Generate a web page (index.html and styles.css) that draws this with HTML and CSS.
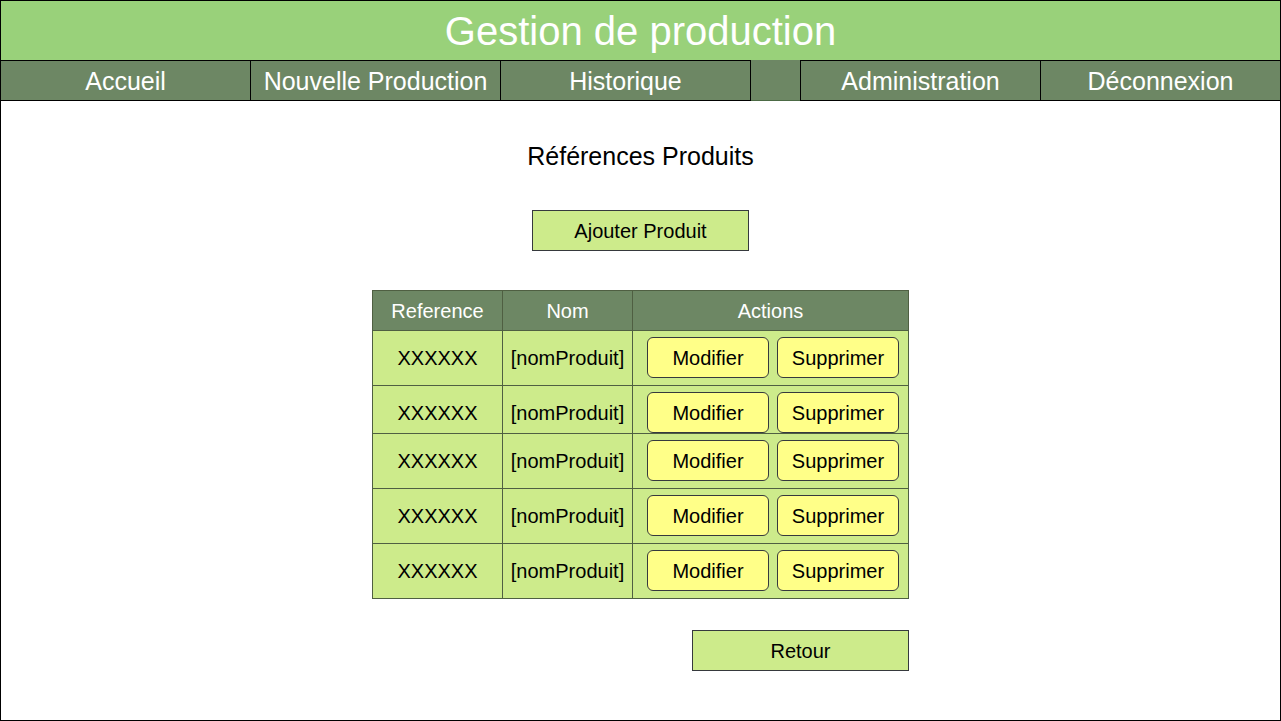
FILE: index.html
```html
<!DOCTYPE html>
<html lang="fr">
<head>
  <meta charset="utf-8">
  <title>Gestion de production</title>
  <meta name="viewport" content="width=device-width, initial-scale=1">
  <link rel="stylesheet" href="styles.css">
</head>
<body>
  <div class="page">
    <header class="banner">
      <h1 class="banner-title">Gestion de production</h1>
    </header>
    <nav class="nav">
      <a class="nav-link nav-first" href="#">Accueil</a>
      <a class="nav-link" href="#">Nouvelle Production</a>
      <a class="nav-link nav-closed" href="#">Historique</a>
      <span class="nav-space"></span>
      <a class="nav-link" href="#">Administration</a>
      <a class="nav-link" href="#">Déconnexion</a>
    </nav>
    <main class="content">
      <h2 class="title">Références Produits</h2>
      <button class="button" type="button">Ajouter Produit</button>
      <div class="listing">
        <table class="products">
          <thead>
            <tr><th class="col-small">Reference</th><th class="col-small">Nom</th><th>Actions</th></tr>
          </thead>
          <tbody>
            <tr>
              <td>XXXXXX</td><td>[nomProduit]</td>
              <td class="cell-actions"><div class="actions"><button class="action" type="button">Modifier</button><button class="action" type="button">Supprimer</button></div></td>
            </tr>
            <tr class="row-tight">
              <td>XXXXXX</td><td>[nomProduit]</td>
              <td class="cell-actions"><div class="actions"><button class="action" type="button">Modifier</button><button class="action" type="button">Supprimer</button></div></td>
            </tr>
            <tr>
              <td>XXXXXX</td><td>[nomProduit]</td>
              <td class="cell-actions"><div class="actions"><button class="action" type="button">Modifier</button><button class="action" type="button">Supprimer</button></div></td>
            </tr>
            <tr>
              <td>XXXXXX</td><td>[nomProduit]</td>
              <td class="cell-actions"><div class="actions"><button class="action" type="button">Modifier</button><button class="action" type="button">Supprimer</button></div></td>
            </tr>
            <tr>
              <td>XXXXXX</td><td>[nomProduit]</td>
              <td class="cell-actions"><div class="actions"><button class="action" type="button">Modifier</button><button class="action" type="button">Supprimer</button></div></td>
            </tr>
          </tbody>
        </table>
        <button class="button" type="button">Retour</button>
      </div>
    </main>
  </div>
</body>
</html>
```

FILE: styles.css
```css
* {
  box-sizing: border-box;
}

body {
  margin: 0;
  background: #fff;
  color: #000;
  font-family: "Liberation Sans", Arial, sans-serif;
  font-size: 20px;
}

.page {
  min-height: 100vh;
  border: 1px solid #000;
}

.banner {
  padding-top: 2px;
  background: #99d17a;
  color: #fff;
  text-align: center;
}

.banner-title {
  margin: 0;
  font-size: 40px;
  font-weight: 400;
  line-height: 57px;
}

.nav {
  display: grid;
  grid-template-columns: 249fr 250fr 251fr 49fr 240fr 240fr;
  background: #6d8764;
}

.nav-link {
  padding-top: 2px;
  border: solid #000;
  border-width: 1px 0 1px 1px;
  color: #fff;
  font-size: 25px;
  line-height: 37px;
  text-align: center;
  text-decoration: none;
  white-space: nowrap;
}

.nav-first {
  border-left-width: 0;
}

.nav-closed {
  border-right-width: 1px;
}

.nav-space {
  border-bottom: 1px solid #4c6a45;
}

.content {
  display: flex;
  flex-direction: column;
  align-items: center;
  padding: 40px 0;
}

.title {
  margin: 0 0 39px;
  font-size: 25px;
  font-weight: 400;
  line-height: 30px;
}

.button,
.action {
  padding: 2px 0 0;
  border: 1px solid #36393d;
  color: #000;
  font: inherit;
  line-height: 37px;
  cursor: pointer;
}

.button {
  width: 217px;
  background: #cdeb8b;
}

.listing {
  display: flex;
  flex-direction: column;
  align-items: flex-end;
  gap: 31px;
  margin-top: 39px;
}

.products {
  width: 537px;
  border: solid #4f5f42;
  border-width: 1px 0 0 1px;
  border-spacing: 0;
  table-layout: fixed;
  background: #cdeb8b;
  text-align: center;
}

.products th,
.products td {
  border: solid #4f5f42;
  border-width: 0 1px 1px 0;
}

.products th {
  padding: 2px 0 0;
  background: #6d8764;
  color: #fff;
  font-weight: 400;
  line-height: 37px;
}

.products td {
  padding: 8px 0 7px;
  line-height: 39px;
  vertical-align: top;
}

.products .cell-actions {
  padding-top: 6px;
}

.products .row-tight td {
  padding-bottom: 0;
}

.col-small {
  width: 130px;
}

.actions {
  display: flex;
  gap: 8px;
  padding: 0 9px 0 14px;
}

.action {
  flex: 1;
  border-radius: 6px;
  background: #ffff88;
}
```
